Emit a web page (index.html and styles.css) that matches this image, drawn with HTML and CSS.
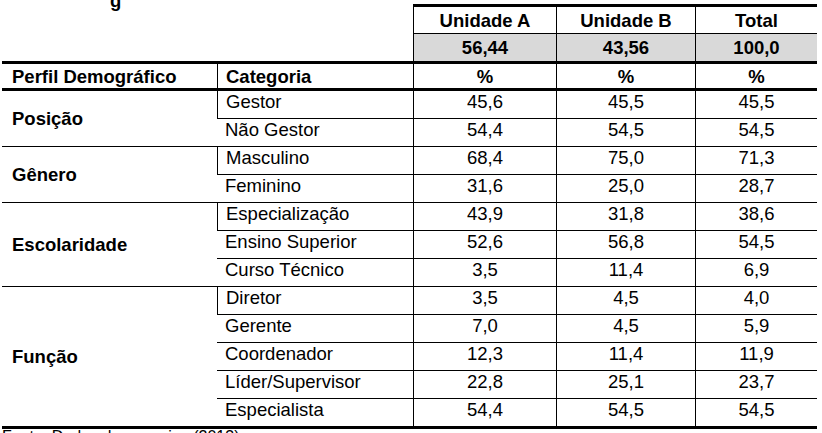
FILE: index.html
```html
<!DOCTYPE html>
<html lang="pt">
<head>
<meta charset="utf-8">
<title>Perfil demográfico</title>
<link rel="stylesheet" href="styles.css">
</head>
<body>
<div class="caption"><span class="caption-text">g</span></div>
<table class="data">
  <colgroup>
    <col class="c1"><col class="c2"><col class="c3"><col class="c4"><col class="c5">
  </colgroup>
  <tr class="head-units">
    <td class="blank" colspan="2"></td>
    <th>Unidade A</th>
    <th>Unidade B</th>
    <th>Total</th>
  </tr>
  <tr class="head-share">
    <td class="blank" colspan="2"></td>
    <th>56,44</th>
    <th>43,56</th>
    <th>100,0</th>
  </tr>
  <tr class="head-cols">
    <th class="label">Perfil Demográfico</th>
    <th class="cat">Categoria</th>
    <th>%</th>
    <th>%</th>
    <th>%</th>
  </tr>
  <tr>
    <td class="group" rowspan="2">Posição</td>
    <td class="cat">Gestor</td><td>45,6</td><td>45,5</td><td>45,5</td>
  </tr>
  <tr>
    <td class="cat">Não Gestor</td><td>54,4</td><td>54,5</td><td>54,5</td>
  </tr>
  <tr>
    <td class="group" rowspan="2">Gênero</td>
    <td class="cat">Masculino</td><td>68,4</td><td>75,0</td><td>71,3</td>
  </tr>
  <tr>
    <td class="cat">Feminino</td><td>31,6</td><td>25,0</td><td>28,7</td>
  </tr>
  <tr>
    <td class="group" rowspan="3">Escolaridade</td>
    <td class="cat">Especialização</td><td>43,9</td><td>31,8</td><td>38,6</td>
  </tr>
  <tr>
    <td class="cat">Ensino Superior</td><td>52,6</td><td>56,8</td><td>54,5</td>
  </tr>
  <tr>
    <td class="cat">Curso Técnico</td><td>3,5</td><td>11,4</td><td>6,9</td>
  </tr>
  <tr>
    <td class="group last" rowspan="5">Função</td>
    <td class="cat">Diretor</td><td>3,5</td><td>4,5</td><td>4,0</td>
  </tr>
  <tr>
    <td class="cat">Gerente</td><td>7,0</td><td>4,5</td><td>5,9</td>
  </tr>
  <tr>
    <td class="cat">Coordenador</td><td>12,3</td><td>11,4</td><td>11,9</td>
  </tr>
  <tr>
    <td class="cat">Líder/Supervisor</td><td>22,8</td><td>25,1</td><td>23,7</td>
  </tr>
  <tr class="last-row">
    <td class="cat">Especialista</td><td>54,4</td><td>54,5</td><td>54,5</td>
  </tr>
</table>
<div class="source">Fonte: Dados da pesquisa (2013)</div>
</body>
</html>
```

FILE: styles.css
```css
html, body {
  margin: 0;
  padding: 0;
  background: #ffffff;
  color: #000000;
  font-family: "Liberation Sans", Arial, sans-serif;
}

.caption {
  display: flow-root;
  height: 4px;
  padding-left: 110px;
  font-size: 18.5px;
  font-weight: bold;
}

.caption-text {
  display: block;
  margin-top: -10px;
  line-height: 22px;
}

.data {
  margin-left: 2px;
  width: 815px;
  table-layout: fixed;
  border-collapse: separate;
  border-spacing: 0;
  font-size: 18.5px;
}

.c1 { width: 215px; }
.c2 { width: 196px; }
.c3 { width: 143px; }
.c4 { width: 139px; }
.c5 { width: 122px; }

.data th,
.data td {
  padding: 0 0 5px 0;
  line-height: 22px;
  text-align: center;
  white-space: nowrap;
  border-bottom: 1px solid #000;
  font-weight: normal;
}

.data th {
  font-weight: bold;
}

.data tr > :nth-child(n+2) {
  border-left: 1px solid #000;
}

.data td.blank {
  border-left: none;
}

.head-units th {
  border-top: 3px solid #000;
  padding: 3px 0 1px 0;
}

.head-units td.blank {
  border-bottom: none;
}

.head-share th,
.head-share td.blank {
  padding: 3px 0 2px 0;
  border-bottom: 3px solid #000;
}

.head-share th {
  background: #d9d9d9;
}

.head-cols th {
  padding: 2px 0 0 0;
  border-bottom: 3px solid #000;
}

.data .label {
  text-align: left;
  padding-left: 10px;
}

.data .cat {
  text-align: left;
  padding-left: 8px;
}

.data td.group {
  text-align: left;
  padding: 0 0 0 10px;
  font-weight: bold;
  vertical-align: middle;
}

.data td.group.last,
.last-row td {
  border-bottom: 3px solid #000;
}

.source {
  margin-left: 2px;
  font-size: 16px;
  line-height: 16px;
}
```
